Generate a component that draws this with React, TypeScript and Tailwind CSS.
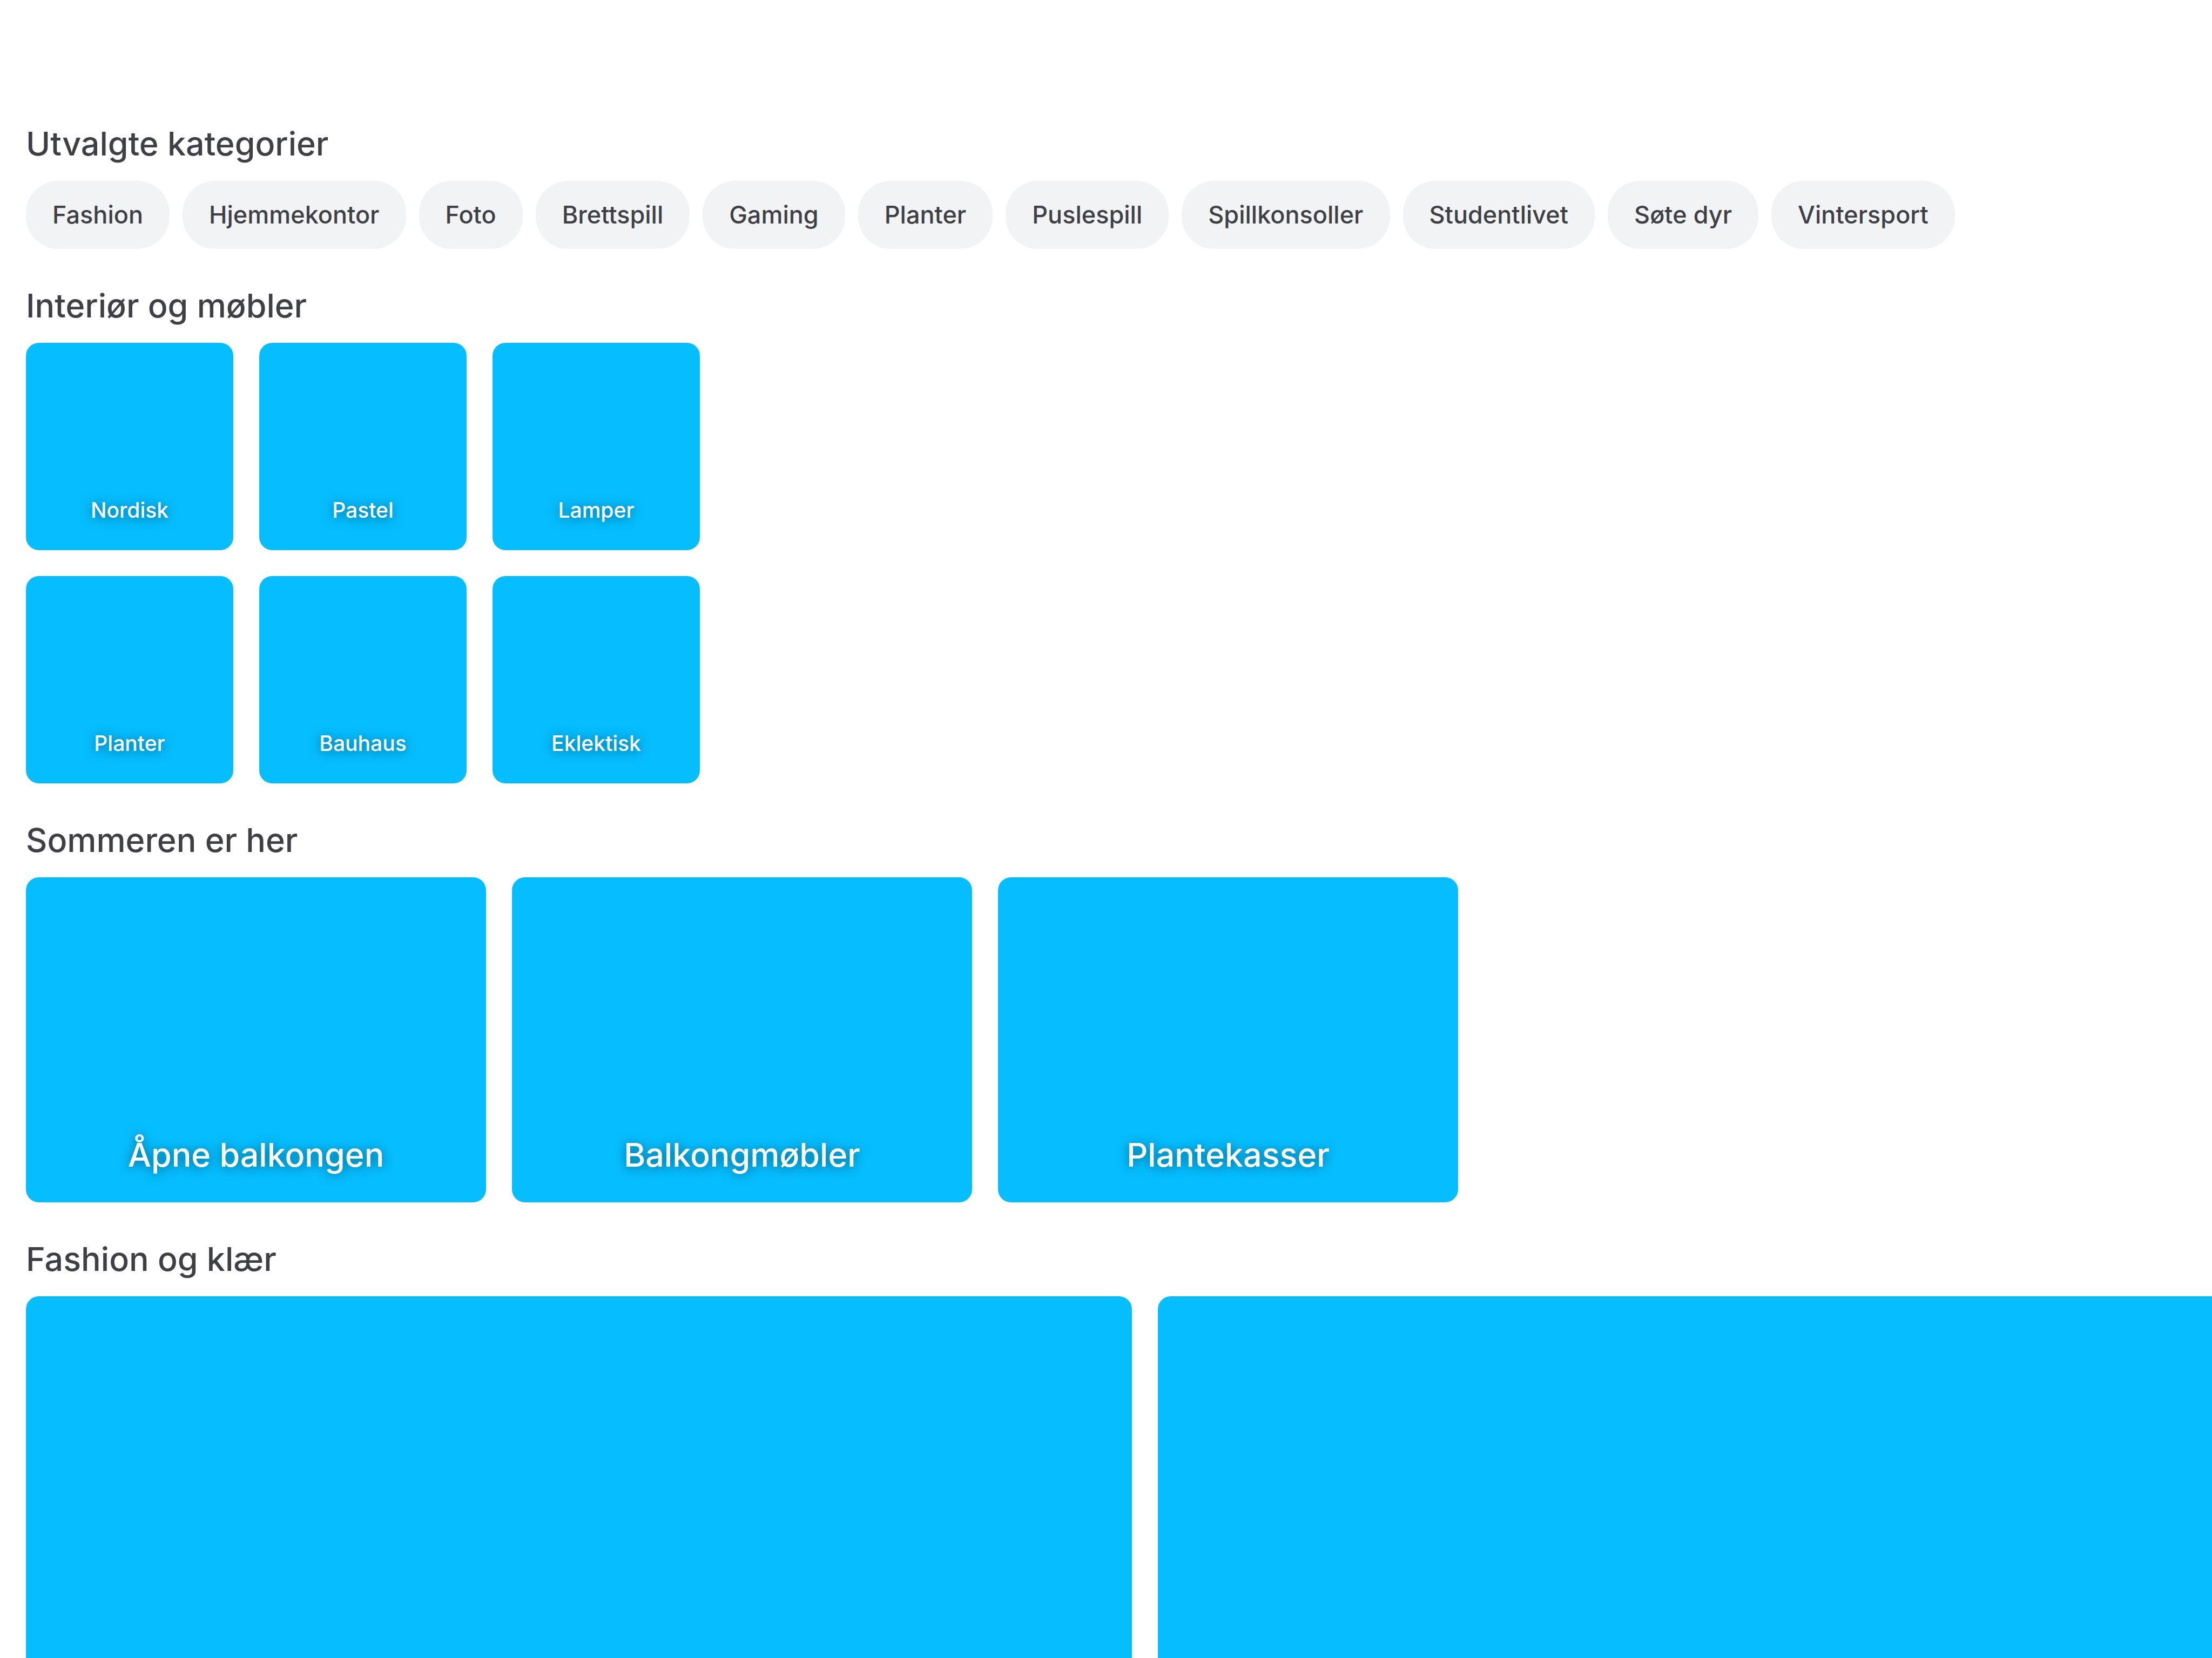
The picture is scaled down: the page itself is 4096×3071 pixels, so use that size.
import type { ReactNode } from "react";

const categories = [
  "Fashion",
  "Hjemmekontor",
  "Foto",
  "Brettspill",
  "Gaming",
  "Planter",
  "Puslespill",
  "Spillkonsoller",
  "Studentlivet",
  "Søte dyr",
  "Vintersport",
];

const interior = ["Nordisk", "Pastel", "Lamper", "Planter", "Bauhaus", "Eklektisk"];

const summer = ["Åpne balkongen", "Balkongmøbler", "Plantekasser"];

function Section({ title, children }: { title: string; children: ReactNode }) {
  return (
    <section className="flex flex-col gap-6">
      <h2 className="text-[61px] leading-[90px] font-medium">{title}</h2>
      {children}
    </section>
  );
}

function CategoryPill({ label }: { label: string }) {
  return (
    <a
      href="#"
      className="shrink-0 rounded-[60px] bg-[#f2f3f5] px-[49px] py-9 text-[45px] leading-[54px] font-medium whitespace-nowrap"
    >
      {label}
    </a>
  );
}

function Tile({ label }: { label: string }) {
  return (
    <a
      href="#"
      className="flex aspect-square items-end justify-center rounded-3xl bg-[#06beff] pb-12 text-[39px] leading-[52px] font-medium text-white [text-shadow:0_2px_20px_rgb(0_0_0/0.5)]"
    >
      {label}
    </a>
  );
}

function Card({ label }: { label: string }) {
  return (
    <a
      href="#"
      className="flex h-[602px] w-[852px] shrink-0 items-end justify-center rounded-3xl bg-[#06beff] pb-12 text-[61px] leading-[80px] font-medium text-white [text-shadow:0_2px_20px_rgb(0_0_0/0.5)]"
    >
      {label}
    </a>
  );
}

export default function App() {
  return (
    <main className="flex h-screen flex-col gap-[60px] overflow-hidden bg-white pt-[221px] pl-12 font-['Inter',sans-serif] text-[#3f3f46]">
      <Section title="Utvalgte kategorier">
        <nav className="flex gap-6">
          {categories.map((label) => (
            <CategoryPill key={label} label={label} />
          ))}
        </nav>
      </Section>

      <Section title="Interiør og møbler">
        <div className="grid grid-cols-[repeat(3,384px)] gap-12">
          {interior.map((label) => (
            <Tile key={label} label={label} />
          ))}
        </div>
      </Section>

      <Section title="Sommeren er her">
        <div className="flex gap-12">
          {summer.map((label) => (
            <Card key={label} label={label} />
          ))}
        </div>
      </Section>

      <Section title="Fashion og klær">
        <div className="flex gap-12">
          <div className="aspect-[4/3] w-[50vw] shrink-0 rounded-3xl bg-[#06beff]" />
          <div className="aspect-[4/3] w-[50vw] shrink-0 rounded-3xl bg-[#06beff]" />
        </div>
      </Section>
    </main>
  );
}
